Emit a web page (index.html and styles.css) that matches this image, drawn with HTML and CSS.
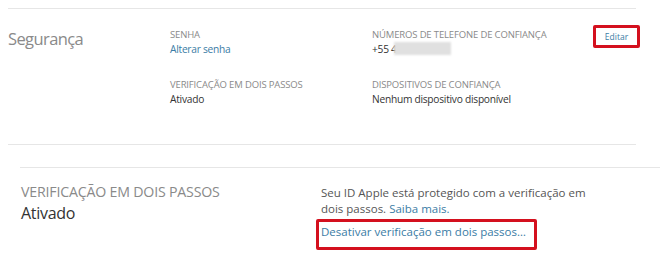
FILE: index.html
```html
<!DOCTYPE html>
<html lang="pt-BR">
<head>
<meta charset="utf-8">
<title>Segurança</title>
<link rel="stylesheet" href="styles.css">
</head>
<body>
<div class="page">
  <section class="security">
    <h2 class="sec-title">Segurança</h2>
    <div class="col col-a">
      <div class="field">
        <div class="label">SENHA</div>
        <a class="link" href="#">Alterar senha</a>
      </div>
      <div class="field">
        <div class="label">VERIFICAÇÃO EM DOIS PASSOS</div>
        <div class="value">Ativado</div>
      </div>
    </div>
    <div class="col col-b">
      <div class="field">
        <div class="label">NÚMEROS DE TELEFONE DE CONFIANÇA</div>
        <div class="value">+55 4<span class="redact"></span></div>
      </div>
      <div class="field">
        <div class="label">DISPOSITIVOS DE CONFIANÇA</div>
        <div class="value">Nenhum dispositivo disponível</div>
      </div>
    </div>
    <div class="col col-c">
      <a class="edit" href="#">Editar</a>
    </div>
  </section>
  <section class="twostep">
    <div class="ts-left">
      <div class="ts-label">VERIFICAÇÃO EM DOIS PASSOS</div>
      <div class="ts-value">Ativado</div>
    </div>
    <div class="ts-right">
      <p class="ts-text">Seu ID Apple está protegido com a verificação em dois passos. <a class="link" href="#">Saiba mais.</a></p>
      <a class="deact" href="#">Desativar verificação em dois passos…</a>
    </div>
  </section>
</div>
</body>
</html>
```
FILE: styles.css
```css
* { box-sizing: border-box; }
html, body {
  margin: 0;
  padding: 0;
  background: #ffffff;
}
body {
  font-family: "Open Sans", "Noto Sans", sans-serif;
  color: #333333;
}
a { text-decoration: none; }
.page {
  width: 660px;
  height: 271px;
  padding-top: 8px;
  overflow: hidden;
}
.security {
  margin-left: 8px;
  width: 628px;
  height: 137px;
  border-top: 1px solid #e6e6e6;
  border-bottom: 1px solid #e6e6e6;
  display: grid;
  grid-template-columns: 162px 202px 221px 43px;
  align-items: start;
}
.sec-title {
  margin: 0;
  padding-top: 18px;
  font-size: 16.5px;
  font-weight: 400;
  line-height: 24px;
  color: #8a8a8a;
  letter-spacing: -0.6px;
}
.col {
  padding-top: 19px;
  display: flex;
  flex-direction: column;
  gap: 21px;
}
.field {
  display: flex;
  flex-direction: column;
}
.label {
  font-size: 9.5px;
  line-height: 13px;
  color: #8a8a8a;
  letter-spacing: -0.15px;
}
.value, .link {
  font-size: 10.2px;
  line-height: 16px;
  letter-spacing: -0.25px;
}
.value { color: #333333; }
.link { color: #3a7ca5; }
.redact {
  display: inline-block;
  vertical-align: top;
  margin-top: 1px;
  margin-left: -3px;
  width: 57px;
  height: 13px;
  background: #e0e0e0;
  filter: blur(1.3px);
}
.col-c {
  padding-top: 16px;
  align-items: flex-end;
}
.edit {
  display: block;
  width: 47px;
  height: 23px;
  margin-right: -4px;
  border: 3px solid #d4101e;
  border-radius: 2px;
  background: #fff;
  color: #3a7ca5;
  font-size: 8.5px;
  line-height: 17px;
  text-align: center;
  letter-spacing: 0;
}
.twostep {
  margin-top: 22px;
  margin-left: 20px;
  border-top: 1px solid #e6e6e6;
  display: grid;
  grid-template-columns: 301px 1fr;
  padding-top: 14px;
}
.ts-left { padding-left: 1px; }
.ts-label {
  font-size: 14.2px;
  line-height: 20px;
  color: #8a8a8a;
  letter-spacing: -0.2px;
}
.ts-value {
  font-size: 16px;
  line-height: 22px;
  color: #333333;
  letter-spacing: -0.3px;
}
.ts-right {
  display: flex;
  flex-direction: column;
  align-items: flex-start;
  padding-top: 3px;
}
.ts-text {
  margin: 0;
  width: 274px;
  font-size: 11.5px;
  line-height: 16px;
  color: #555555;
}
.ts-text .link {
  font-size: inherit;
  letter-spacing: 0;
  line-height: inherit;
}
.deact {
  margin-left: -5px;
  margin-top: 2px;
  width: 221px;
  height: 31px;
  padding: 2px 0 0 2px;
  border: 3px solid #d4101e;
  border-radius: 2px;
  color: #3a7ca5;
  font-size: 11.5px;
  line-height: 16px;
}
```
